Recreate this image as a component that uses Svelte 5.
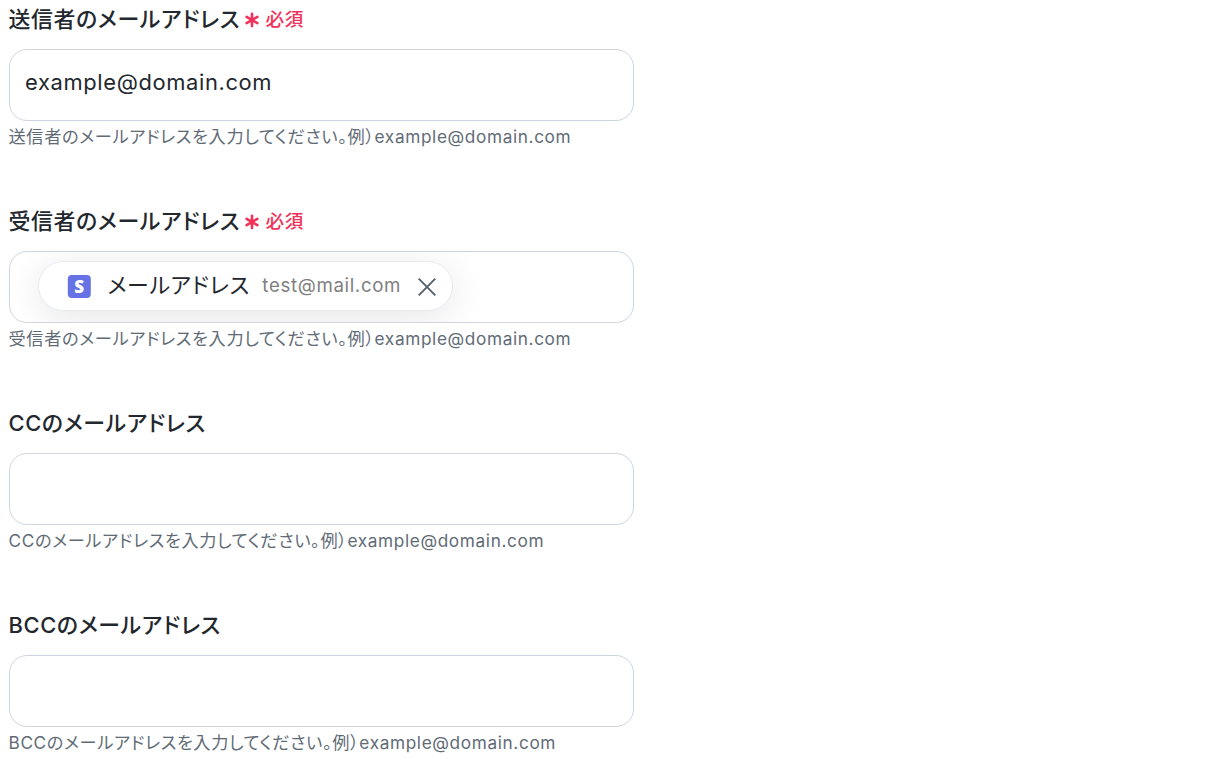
<script lang="ts">
	interface Field {
		id: string;
		label: string;
		required?: boolean;
		value?: string;
		chip?: { label: string; value: string };
	}

	let fields: Field[] = $state([
		{ id: 'from', label: '送信者のメールアドレス', required: true, value: 'example@domain.com' },
		{
			id: 'to',
			label: '受信者のメールアドレス',
			required: true,
			chip: { label: 'メールアドレス', value: 'test@mail.com' }
		},
		{ id: 'cc', label: 'CCのメールアドレス' },
		{ id: 'bcc', label: 'BCCのメールアドレス' }
	]);

	function removeChip(field: Field) {
		field.chip = undefined;
	}
</script>

<form class="mail-form">
	{#each fields as field (field.id)}
		<div class="field">
			<div class="field-head">
				<span class="label">{field.label}</span>
				{#if field.required}
					<span class="required">
						<svg class="asterisk" width="14" height="16" viewBox="0 0 14 16" fill="none" stroke="currentColor" stroke-width="2.6" stroke-linecap="round">
							<path d="M7 1.9v12.2M1.6 4.9l10.8 6.2M12.4 4.9l-10.8 6.2" />
						</svg>
						必須
					</span>
				{/if}
			</div>

			<div class="input-box">
				{#if field.chip}
					<div class="chip">
						<svg class="chip-icon" width="24" height="24" viewBox="0 0 24 24">
							<rect x="0.8" y="0.9" width="23" height="23" rx="4" fill="#6772e5" />
							<text x="12.2" y="18.6" text-anchor="middle">S</text>
						</svg>
						<span class="chip-label">{field.chip.label}</span>
						<span class="chip-value">{field.chip.value}</span>
						<button class="chip-remove" type="button" aria-label="Remove" onclick={() => removeChip(field)}>
							<svg width="18" height="18" viewBox="0 0 18 18" fill="none" stroke="currentColor" stroke-width="1.9">
								<path d="M0.7 0.7l16.6 16.6M17.3 0.7L0.7 17.3" />
							</svg>
						</button>
					</div>
				{:else if field.value}
					<span class="value">{field.value}</span>
				{/if}
			</div>

			<p class="help">{field.label}を入力してください。例）example@domain.com</p>
		</div>
	{/each}
</form>

<style>
	:global(body) {
		background: #fff;
	}

	.mail-form {
		display: flex;
		flex-direction: column;
		gap: 49px;
		width: 625px;
		padding-left: 9px;
		font-family: Inter, 'Noto Sans CJK JP', sans-serif;
		font-feature-settings: 'palt';
		letter-spacing: 0.04em;
		color: #23272e;
	}

	.field-head {
		display: flex;
		align-items: center;
		height: 38px;
		margin-bottom: 11px;
	}

	.label {
		margin-left: -0.5px;
		font-size: 21.9px;
		font-weight: 450;
		line-height: 38px;
	}

	.required {
		display: flex;
		align-items: center;
		gap: 6px;
		margin-left: 5.3px;
		font-size: 18.6px;
		font-weight: 500;
		line-height: 38px;
		color: #f0325a;
	}

	.asterisk {
		margin-top: 2px;
	}

	.input-box {
		display: flex;
		align-items: center;
		box-sizing: border-box;
		height: 72px;
		padding: 0 15px;
		border: 1px solid #cdd5df;
		border-radius: 18px;
		overflow: hidden;
	}

	.value {
		padding-bottom: 6px;
		font-size: 21.9px;
	}

	.chip {
		display: flex;
		align-items: center;
		box-sizing: border-box;
		width: 415px;
		height: 50px;
		margin: 0 0 2px 13px;
		padding: 0 16.5px 0 28px;
		border: 1px solid #e6eaf0;
		border-radius: 25px;
		background: #fff;
		box-shadow: 0 6px 36px rgba(0, 0, 0, 0.1);
	}

	.chip-icon text {
		font-family: 'Open Sans', sans-serif;
		font-size: 17px;
		font-weight: 800;
		letter-spacing: 0;
		fill: #fff;
	}

	.chip-label {
		margin-left: 16.5px;
		padding-bottom: 5px;
		font-size: 21.9px;
	}

	.chip-value {
		margin-left: 12.5px;
		padding-bottom: 2px;
		font-size: 18.7px;
		color: #808080;
	}

	.chip-remove {
		display: flex;
		margin-left: auto;
		padding: 1px 0 0;
		border: none;
		background: none;
		color: #56616d;
		cursor: pointer;
	}

	.help {
		margin: 0 0 0 -0.5px;
		font-size: 17.22px;
		line-height: 32px;
		white-space: nowrap;
		color: #616b76;
	}

	.field:last-child .help {
		height: 31px;
	}
</style>
